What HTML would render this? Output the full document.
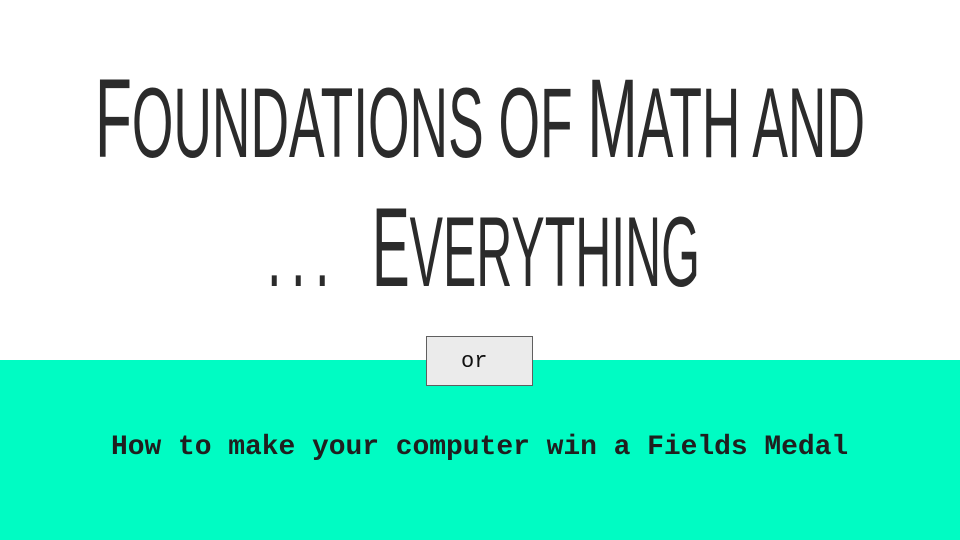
<!DOCTYPE html>
<html><head><meta charset="utf-8"><style>
html,body{margin:0;padding:0;width:960px;height:540px;overflow:hidden;background:#fff}
.teal{position:absolute;left:0;top:360px;width:960px;height:180px;background:#00fcc3}
.box{position:absolute;left:426px;top:336px;width:105px;height:48px;background:#ebebeb;border:1px solid #5f5f5f;font:22px "Liberation Mono",monospace;color:#111}
.box span{position:absolute;left:34px;top:12px}
.sub{position:absolute;left:111px;top:432px;font:bold 28px "Liberation Mono",monospace;color:#1f1f1f;white-space:nowrap;letter-spacing:-0.05px}
svg{position:absolute;left:0;top:0}
</style></head><body>
<div class="teal"></div>
<svg width="960" height="540">
<g fill="#2b2b2b" font-family="Liberation Sans, sans-serif">
<text x="95" y="157" textLength="770" lengthAdjust="spacingAndGlyphs"><tspan font-size="112">F</tspan><tspan font-size="99">OUNDATIONS </tspan><tspan font-size="99">OF </tspan><tspan font-size="112">M</tspan><tspan font-size="99">ATH AND</tspan></text>
<text x="267" y="286" textLength="72" lengthAdjust="spacingAndGlyphs" font-size="99" letter-spacing="18">...</text>
<text x="372" y="286" textLength="328" lengthAdjust="spacingAndGlyphs"><tspan font-size="112">E</tspan><tspan font-size="99">VERYTHING</tspan></text>
</g>
</svg>
<div class="box"><span>or</span></div>
<div class="sub">How to make your computer win a Fields Medal</div>
</body></html>
